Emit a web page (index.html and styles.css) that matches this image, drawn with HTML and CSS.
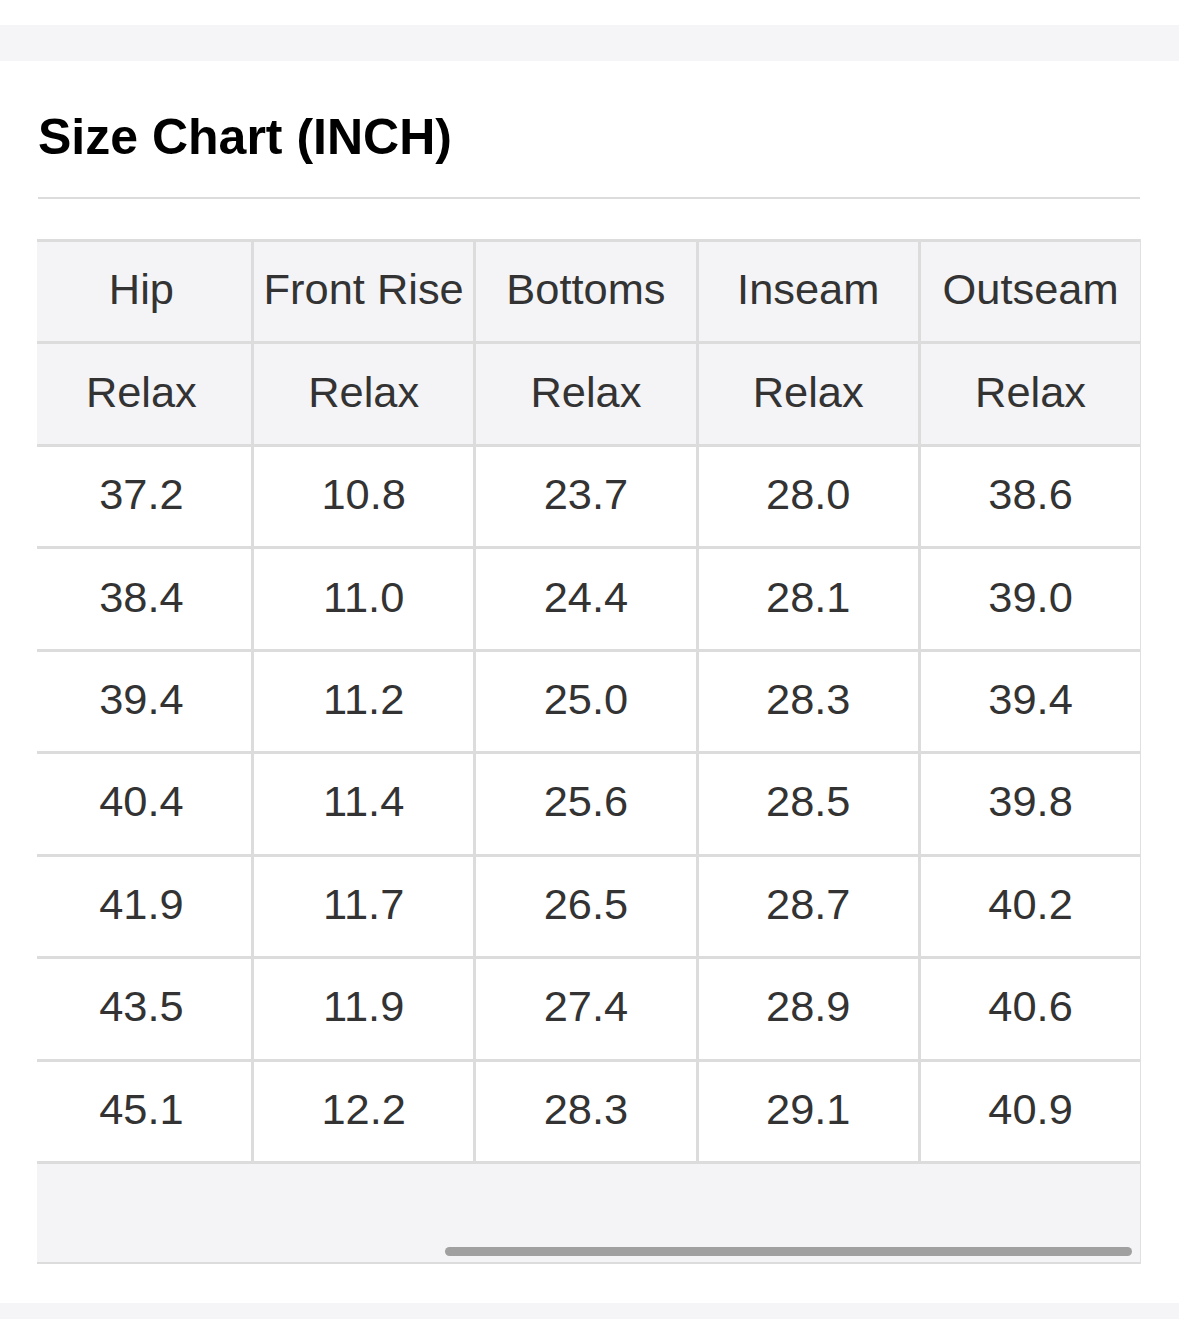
FILE: index.html
```html
<!DOCTYPE html>
<html lang="en">
<head>
<meta charset="utf-8">
<title>Size Chart</title>
<link rel="stylesheet" href="styles.css">
</head>
<body>
<div class="band band-top"></div>
<section class="card">
  <h2 class="title">Size Chart (INCH)</h2>
  <hr class="rule">
  <div class="scroller">
    <div class="viewport">
      <table class="chart">
        <thead>
          <tr><th>Hip</th><th>Front Rise</th><th>Bottoms</th><th>Inseam</th><th>Outseam</th></tr>
          <tr><th>Relax</th><th>Relax</th><th>Relax</th><th>Relax</th><th>Relax</th></tr>
        </thead>
        <tbody>
          <tr><td>37.2</td><td>10.8</td><td>23.7</td><td>28.0</td><td>38.6</td></tr>
          <tr><td>38.4</td><td>11.0</td><td>24.4</td><td>28.1</td><td>39.0</td></tr>
          <tr><td>39.4</td><td>11.2</td><td>25.0</td><td>28.3</td><td>39.4</td></tr>
          <tr><td>40.4</td><td>11.4</td><td>25.6</td><td>28.5</td><td>39.8</td></tr>
          <tr><td>41.9</td><td>11.7</td><td>26.5</td><td>28.7</td><td>40.2</td></tr>
          <tr><td>43.5</td><td>11.9</td><td>27.4</td><td>28.9</td><td>40.6</td></tr>
          <tr><td>45.1</td><td>12.2</td><td>28.3</td><td>29.1</td><td>40.9</td></tr>
        </tbody>
      </table>
    </div>
    <div class="track"><div class="thumb"></div></div>
  </div>
</section>
<div class="band band-bottom"></div>
</body>
</html>
```

FILE: styles.css
```css
html, body {
  margin: 0;
  padding: 0;
  background: #ffffff;
}

body {
  font-family: "Liberation Sans", Arial, sans-serif;
  color: #333333;
}

.band {
  background: #f5f5f7;
}

.band-top {
  margin-top: 25px;
  height: 36px;
}

.band-bottom {
  height: 17px;
}

.card {
  padding: 51px 38px 39px 37px;
}

.title {
  margin: 0 0 0 1px;
  font-size: 50px;
  line-height: 50px;
  font-weight: 700;
  color: #000000;
}

.rule {
  margin: 35px 1px 0 1px;
  border: 0;
  height: 2px;
  background: #dcdcdc;
}

.scroller {
  margin-top: 40px;
  border-right: 1px solid #e0e0e0;
}

.viewport {
  overflow: hidden;
}

.chart {
  border-collapse: separate;
  border-spacing: 0;
  table-layout: fixed;
  width: 1111.5px;
  margin-left: -5.3px;
  border-top: 3px solid #dcdcdc;
}

.chart th,
.chart td {
  box-sizing: border-box;
  width: 222.3px;
  height: 102.44px;
  padding: 0 0 4px 0;
  border-right: 3px solid #dcdcdc;
  border-bottom: 3px solid #dcdcdc;
  text-align: center;
  vertical-align: middle;
  font-size: 43.4px;
  font-weight: 400;
  color: #333333;
  white-space: nowrap;
}

.chart th {
  background: #f4f4f6;
}

.chart td {
  background: #ffffff;
}

.track {
  box-sizing: border-box;
  height: 100px;
  background: #f4f4f6;
  border-bottom: 2px solid #dcdcdc;
  display: flex;
  align-items: flex-end;
  justify-content: flex-end;
  padding: 0 8px 6px 0;
}

.thumb {
  width: 687px;
  height: 9px;
  border-radius: 5px;
  background: #a0a0a0;
}
```
